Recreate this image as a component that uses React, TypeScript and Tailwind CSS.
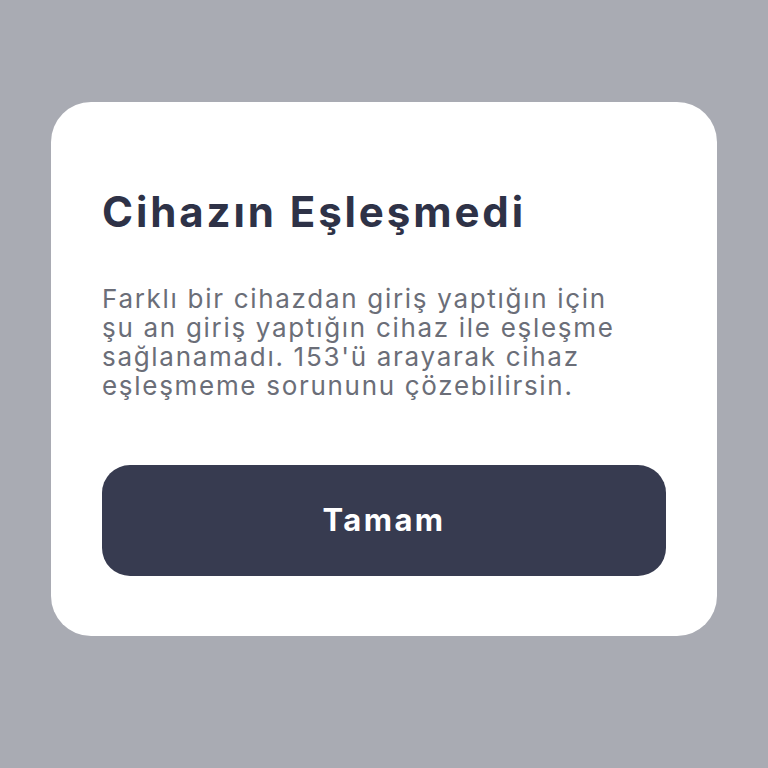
export default function App() {
  return (
    <div className="w-[768px] h-[768px] bg-[#a9abb3] flex items-start justify-center pt-[102px]" style={{ fontFamily: "Inter, 'Noto Sans', sans-serif" }}>
      <div className="w-[666px] h-[534px] bg-white rounded-[40px] px-[51px] pt-[84px] flex flex-col">
        <h1 className="text-[42px] leading-[52px] font-bold text-[#2e3247] tracking-[2.9px] whitespace-nowrap">Cihazın Eşleşmedi</h1>
        <p className="mt-[46px] text-[26px] leading-[29px] text-[#6b6e78] tracking-[1.7px] whitespace-nowrap">
          Farklı bir cihazdan giriş yaptığın için<br />
          şu an giriş yaptığın cihaz ile eşleşme<br />
          sağlanamadı. 153'ü arayarak cihaz<br />
          eşleşmeme sorununu çözebilirsin.
        </p>
        <button className="mt-[65px] h-[111px] w-full rounded-[28px] bg-[#373b50] text-white text-[31px] font-bold tracking-[2.4px]">Tamam</button>
      </div>
    </div>
  );
}
